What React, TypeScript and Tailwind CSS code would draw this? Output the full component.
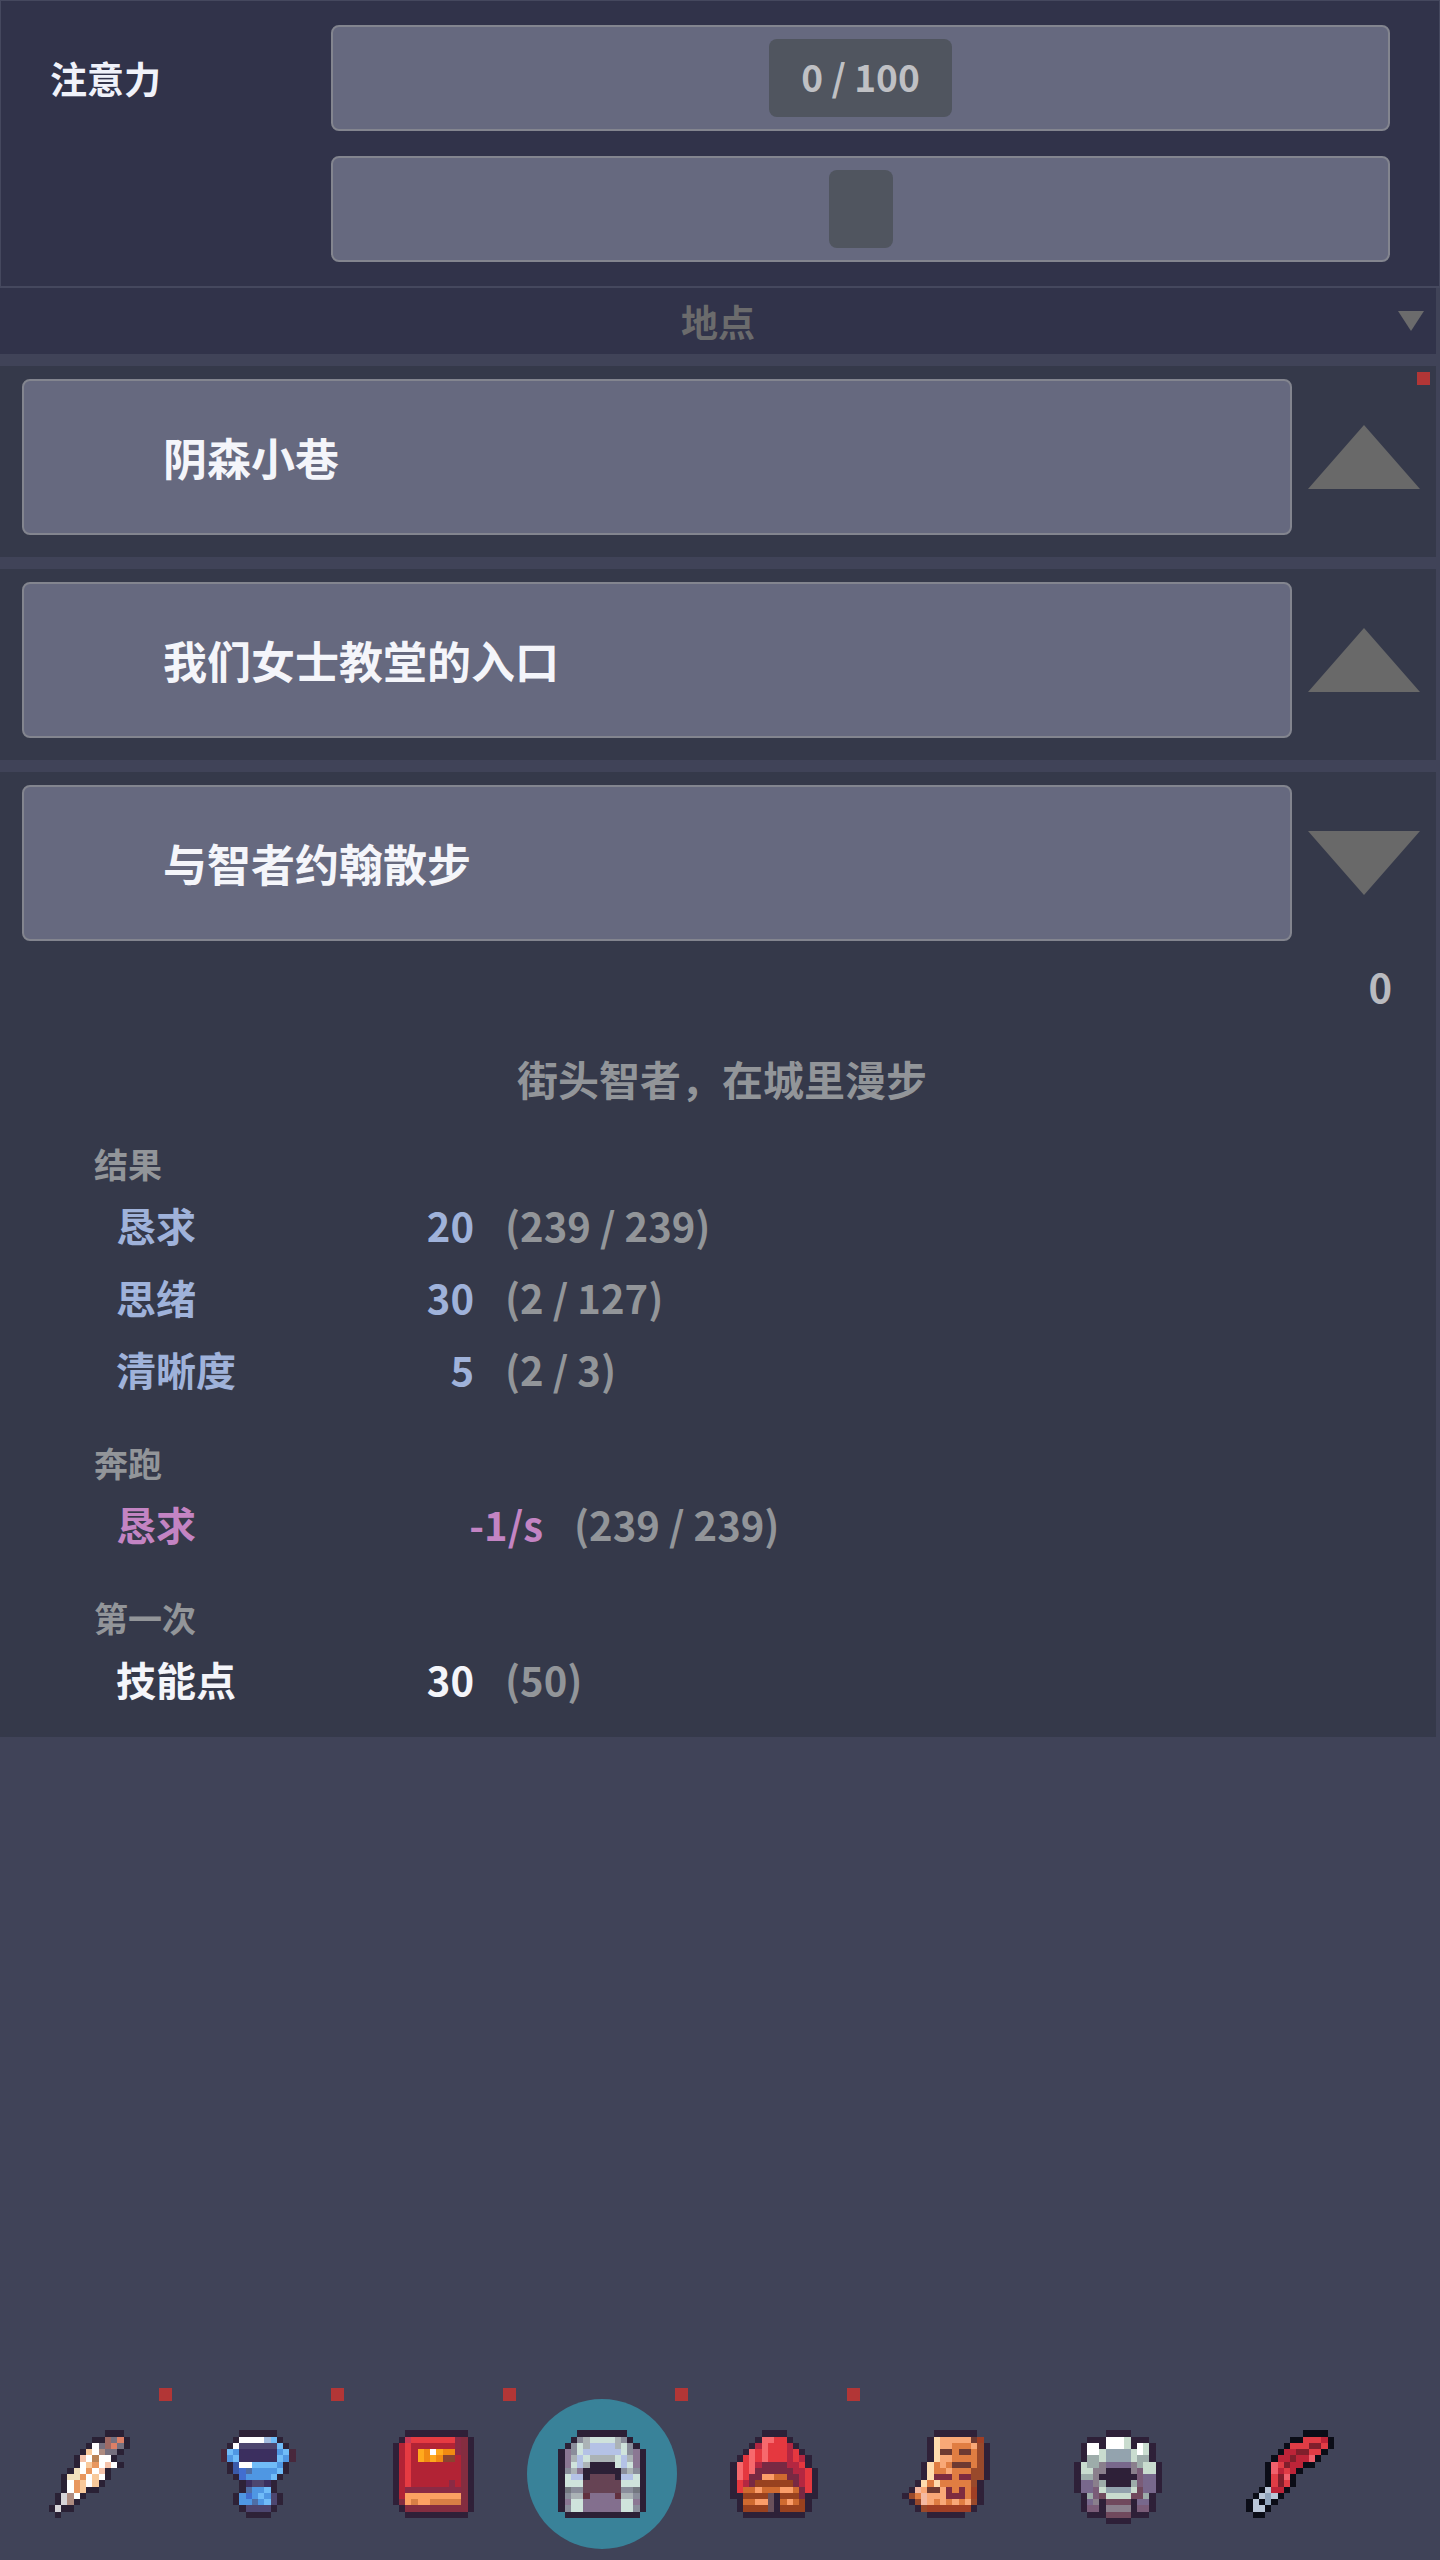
import { useState } from "react";
import { clsx } from "clsx";

type Tone = "blue" | "pink" | "white";

type EffectRow = {
  label: string;
  amount: string;
  held: string;
  tone: Tone;
};

type EffectGroup = {
  title: string;
  wide?: boolean;
  rows: EffectRow[];
};

type Place = {
  id: string;
  name: string;
  isNew?: boolean;
  count?: string;
  description?: string;
  groups?: EffectGroup[];
};

type Sprite = {
  palette: Record<string, string>;
  rows: string[];
};

const places: Place[] = [
  { id: "alley", name: "阴森小巷", isNew: true },
  { id: "church", name: "我们女士教堂的入口" },
  {
    id: "walk",
    name: "与智者约翰散步",
    count: "0",
    description: "街头智者，在城里漫步",
    groups: [
      {
        title: "结果",
        rows: [
          { label: "恳求", amount: "20", held: "(239 / 239)", tone: "blue" },
          { label: "思绪", amount: "30", held: "(2 / 127)", tone: "blue" },
          { label: "清晰度", amount: "5", held: "(2 / 3)", tone: "blue" },
        ],
      },
      {
        title: "奔跑",
        wide: true,
        rows: [
          { label: "恳求", amount: "-1/s", held: "(239 / 239)", tone: "pink" },
        ],
      },
      {
        title: "第一次",
        rows: [{ label: "技能点", amount: "30", held: "(50)", tone: "white" }],
      },
    ],
  },
];

const toneClasses: Record<Tone, string> = {
  blue: "text-[#9fb2da]",
  pink: "text-[#c384c3]",
  white: "text-[#f4f5fa]",
};

// 16x16 pixel sprites, one character per pixel, "." is transparent
const quill: Sprite = {
  palette: {
    k: "#2a2135", w: "#ffffff", c: "#f1e0bd", p: "#f8c99b", o: "#e8975f",
    s: "#dd7f66", b: "#a06a64", g: "#76707f", t: "#bb8457", l: "#d6d4d8",
    r: "#f5c3ab", n: "#ae8b80",
  },
  rows: [
    "................",
    "...........kkk..",
    ".........kkbgsk.",
    "........kwgbsgk.",
    ".......kpwnggk..",
    "......krwtwwk...",
    "......kwpowrwk..",
    ".....kcwowrk....",
    "....kccowpwk....",
    "....kwopwpk.....",
    "....kwopkk......",
    "...klnwk........",
    "...klnk.........",
    "..klkk..........",
    "...k............",
    "................",
  ],
};

const potion: Sprite = {
  palette: {
    k: "#2e2237", d: "#48283c", w: "#ffffff", y: "#a3bce0", s: "#70bcf8",
    b: "#4f97e3", e: "#3b2f5f", n: "#3a5aa9", r: "#426ed0", g: "#4e6ea6",
    v: "#4d466f",
  },
  rows: [
    "................",
    ".....kkkkkk.....",
    "....kwwwwysk....",
    "...kwvvvvvvsk...",
    "..dsbeeeeeebsd..",
    "..dbseeeeeesbd..",
    "...knwwssssbk...",
    "...knrgbbbbsk...",
    "....krbbbbsk....",
    ".....kevvek.....",
    ".....kgbbsk.....",
    "....kbrbsbvk....",
    "....kbbgbsvk....",
    ".....kvvvvk.....",
    "......kkkk......",
    "................",
  ],
};

const book: Sprite = {
  palette: {
    k: "#2f2038", c: "#b22335", r: "#e63b42", m: "#8a2a45", n: "#842d40",
    y: "#ffa91d", o: "#f18a12", w: "#ffffff", b: "#8a4330", p: "#fda162",
    t: "#d87f45", q: "#c73a57",
  },
  rows: [
    "................",
    "....kkkkkkkkkk..",
    "...kqrrrrrrrmnk.",
    "..kcrcccccccmnk.",
    "..kcrcyowyoomnk.",
    "..kcrcyoyobbcnk.",
    "..kcrccccccccnk.",
    "..kcrccccccccnk.",
    "..kcrccccccccnk.",
    "..kcrccccccmcnk.",
    "..kcmmmmmmmmmnk.",
    "..kcpppppppppnk.",
    "..knptpptttttnk.",
    "...knnnnnnnnnnk.",
    "....kkkkkkkkkk..",
    "................",
  ],
};

const arch: Sprite = {
  palette: {
    k: "#2c2036", g: "#8a8d9b", l: "#abb3b6", p: "#cfe3dc", v: "#b4c2e6",
    u: "#8b7793", m: "#664354", d: "#62303f", h: "#737780", q: "#836f8e",
  },
  rows: [
    "................",
    "....kkkkkkkk....",
    "...kglpppplgk...",
    "..kgplvvvvlpgk..",
    ".kugpvvvvvvpguk.",
    ".kulvpllllpvluk.",
    ".kupvlkkkkpvpuk.",
    ".kglukkkkkkglgk.",
    ".kpvvkmmmmkvvpk.",
    ".kpppmmmmmmpppk.",
    ".khggmmmmmmgghk.",
    ".kglldqqqqdllgk.",
    ".kuppqqqqqqppuk.",
    ".kgppqqqqqqppgk.",
    "..kkkkkkkkkkkk..",
    "................",
  ],
};

const tent: Sprite = {
  palette: {
    k: "#2d2138", r: "#e5383f", p: "#f7696d", c: "#b42741", m: "#782943",
    o: "#cf6a30", e: "#fb9d69", b: "#98411f", g: "#69505a",
  },
  rows: [
    "................",
    "......kkkk......",
    ".....kpprrk.....",
    "....kcprrrck....",
    "...kprprrrcrk...",
    "..krprprrrcrck..",
    ".kprpcmmmmccrk..",
    ".kprpmmmmmmccrk.",
    ".kprmmeeoommcrk.",
    ".krcmbbbbbbmcrk.",
    ".krooeoooeeomrk.",
    ".kkbbbbgkbbbmkk.",
    "..kooeegkoeobk..",
    "..kbbbbgkbbbbk..",
    "...kkkkkkkkkk...",
    "................",
  ],
};

const boot: Sprite = {
  palette: {
    k: "#2f2138", c: "#ffdcae", p: "#f9a877", o: "#e07d42", b: "#99492b",
    d: "#6e3a32", m: "#7d2b40", r: "#a03f25", l: "#f4b9a2",
  },
  rows: [
    "................",
    "......kkkkkkk...",
    ".....kcpppppdr..",
    ".....kcppooopbk.",
    ".....kcddoddobk.",
    ".....kcppoooobk.",
    "....kcopodddobk.",
    "....kcoopooobbk.",
    "....kcmmmommbbk.",
    "...kcocooooobk..",
    "..klpddpmomork..",
    ".kbolpppmmmork..",
    "..kblpopopopbk..",
    "...kbrrrrrrrk...",
    ".....kkkkkk.....",
    "................",
  ],
};

const gear: Sprite = {
  palette: {
    k: "#2e2038", w: "#ffffff", p: "#c9dccf", g: "#9dacaa", b: "#93a3ae",
    u: "#78688c", q: "#8a7f8c", m: "#70495d", v: "#7a5c78",
  },
  rows: [
    "................",
    "......kkkk......",
    "...kkkwwwpkkk...",
    "..kwwkwwwpkwpk..",
    "..kwwpbbbbpwpk..",
    "..kggpbbbbpggk..",
    ".kpggquuuuqgppk.",
    ".kppqqkkkkqvppk.",
    ".kggqkkkkkkvuuk.",
    ".kuuqgkkkkgvuuk.",
    ".kuuvpbbbbpmuuk.",
    "..kgvmppppmmgk..",
    "..kuqkmmmmkuuk..",
    "..kvvkqqqqkvvk..",
    "...kkkmmmmkkk...",
    "......kkkk......",
  ],
};

const knife: Sprite = {
  palette: {
    k: "#0b0d17", r: "#e03c45", p: "#f0606c", c: "#bd2438", m: "#801f2c",
    l: "#b9c6d8", g: "#8fa3bb",
  },
  rows: [
    "................",
    "..........kkkk..",
    "........kkrrrck.",
    ".......krrrmmrk.",
    "......kccmmrrk..",
    ".....kccmccpk...",
    "....kprmcckk....",
    "....kpcrck......",
    "....krmpk.......",
    "....krmrk.......",
    "...klcck........",
    "..klglk.........",
    ".klkgk..........",
    ".kllk...........",
    "..kk............",
    "................",
  ],
};

const tabs = [
  { id: "quill", label: "任务", sprite: quill, isNew: true },
  { id: "potion", label: "物品", sprite: potion, isNew: true },
  { id: "book", label: "技能", sprite: book, isNew: true },
  { id: "places", label: "地点", sprite: arch, isNew: true },
  { id: "camp", label: "住所", sprite: tent, isNew: true },
  { id: "boot", label: "装备", sprite: boot, isNew: false },
  { id: "gear", label: "设置", sprite: gear, isNew: false },
  { id: "knife", label: "工具", sprite: knife, isNew: false },
];

export default function App() {
  const [openId, setOpenId] = useState("walk");
  const [activeTab, setActiveTab] = useState("places");

  return (
    <div className="flex min-h-screen flex-col bg-[#404358] font-['Noto_Sans_CJK_SC',sans-serif] text-[40px] font-bold text-[#929599]">
      <header className="flex border-t border-r border-b-2 border-l border-[#45485e] bg-[#31334a] px-[49px] py-6">
        <h1 className="w-[281px] shrink-0 text-[37px] leading-[106px] text-[#f0f2fa]">
          注意力
        </h1>
        <div className="grid flex-1 gap-[25px]">
          <Meter text="0 / 100" />
          <Meter text="" />
        </div>
      </header>

      <main className="mr-1">
        <div className="relative bg-[#31334a] text-center">
          <h2 className="text-[37px] leading-[66px] text-[#6b6b6c]">地点</h2>
          <button
            type="button"
            aria-label="排序"
            className="absolute inset-y-0 right-3 flex items-center text-[#6b6b6c]"
          >
            <Arrow className="h-5 w-[26px] rotate-180" />
          </button>
        </div>

        <ul className="grid gap-3 pt-3">
          {places.map((place) => (
            <PlaceItem
              key={place.id}
              place={place}
              isOpen={place.id === openId}
              onToggle={() => setOpenId(place.id === openId ? "" : place.id)}
            />
          ))}
        </ul>
      </main>

      <nav className="mt-auto flex">
        {tabs.map((tab) => (
          <button
            key={tab.id}
            type="button"
            aria-label={tab.label}
            onClick={() => setActiveTab(tab.id)}
            className="relative w-[172px] p-[11px]"
          >
            <span
              className={clsx(
                "grid aspect-square place-items-center rounded-full",
                tab.id === activeTab && "bg-[#398299]",
              )}
            >
              <PixelIcon sprite={tab.sprite} />
            </span>
            {tab.isNew ? (
              <span className="absolute top-0 right-0 size-[13px] bg-[#b23636]" />
            ) : null}
          </button>
        ))}
      </nav>
    </div>
  );
}

function Meter({ text }: { text: string }) {
  return (
    <div className="grid h-[106px] place-items-center rounded-lg border-2 border-[#83858f] bg-[#66697f]">
      <span className="h-[78px] rounded-lg bg-[#50555f] px-8 text-[37px] leading-[74px] text-[#bfc0c4]">
        {text}
      </span>
    </div>
  );
}

function PlaceItem({
  place,
  isOpen,
  onToggle,
}: {
  place: Place;
  isOpen: boolean;
  onToggle: () => void;
}) {
  return (
    <li className="relative bg-[#35394a]">
      <div className="flex pt-[13px] pl-[22px]">
        <button
          type="button"
          className="h-[156px] flex-1 rounded-lg border-2 border-[#83858f] bg-[#66697f] pl-[139px] text-left text-[44px] text-[#f4f5fa]"
        >
          {place.name}
        </button>
        <button
          type="button"
          aria-label={place.name}
          aria-expanded={isOpen}
          onClick={onToggle}
          className="grid w-36 place-items-center text-[#696969]"
        >
          <Arrow className={clsx("h-16 w-28", isOpen && "rotate-180")} />
        </button>
      </div>

      {place.isNew ? (
        <span className="absolute top-1.5 right-1.5 size-[13px] bg-[#b23636]" />
      ) : null}

      {isOpen && place.groups ? (
        <div className="pt-[9px] pb-[22px]">
          <p className="pr-11 text-right leading-[72px] text-[#b9bbc0]">
            {place.count}
          </p>
          <p className="mt-5 pl-2 text-center text-[41px] leading-[72px]">
            {place.description}
          </p>
          <div className="mt-[25px] grid gap-[33px] pl-[94px]">
            {place.groups.map((group) => (
              <EffectSection key={group.title} group={group} />
            ))}
          </div>
        </div>
      ) : (
        <div className="h-[22px]" />
      )}
    </li>
  );
}

function EffectSection({ group }: { group: EffectGroup }) {
  return (
    <section>
      <h3 className="text-[34px] leading-[50px]">{group.title}</h3>
      <table className="ml-[22px]">
        <tbody>
          {group.rows.map((row) => (
            <tr key={row.label} className="h-[72px] leading-[72px]">
              <th
                scope="row"
                className={clsx("w-56 p-0 text-left font-bold", toneClasses[row.tone])}
              >
                {row.label}
              </th>
              <td
                className={clsx(
                  "p-0 text-right",
                  group.wide ? "w-[203px]" : "w-[134px]",
                  toneClasses[row.tone],
                )}
              >
                {row.amount}
              </td>
              <td className="py-0 pr-0 pl-[31px]">{row.held}</td>
            </tr>
          ))}
        </tbody>
      </table>
    </section>
  );
}

function Arrow({ className }: { className?: string }) {
  return (
    <svg
      aria-hidden="true"
      viewBox="0 0 100 100"
      preserveAspectRatio="none"
      fill="currentColor"
      className={className}
    >
      <path d="M50 0 100 100H0Z" />
    </svg>
  );
}

function PixelIcon({ sprite }: { sprite: Sprite }) {
  return (
    <svg
      aria-hidden="true"
      viewBox="0 0 16 16"
      shapeRendering="crispEdges"
      className="size-[100px]"
    >
      {sprite.rows.flatMap((row, y) =>
        [...row].map((key, x) =>
          key === "." ? null : (
            <rect
              key={`${x}-${y}`}
              x={x}
              y={y}
              width="1"
              height="1"
              fill={sprite.palette[key]}
            />
          ),
        ),
      )}
    </svg>
  );
}
